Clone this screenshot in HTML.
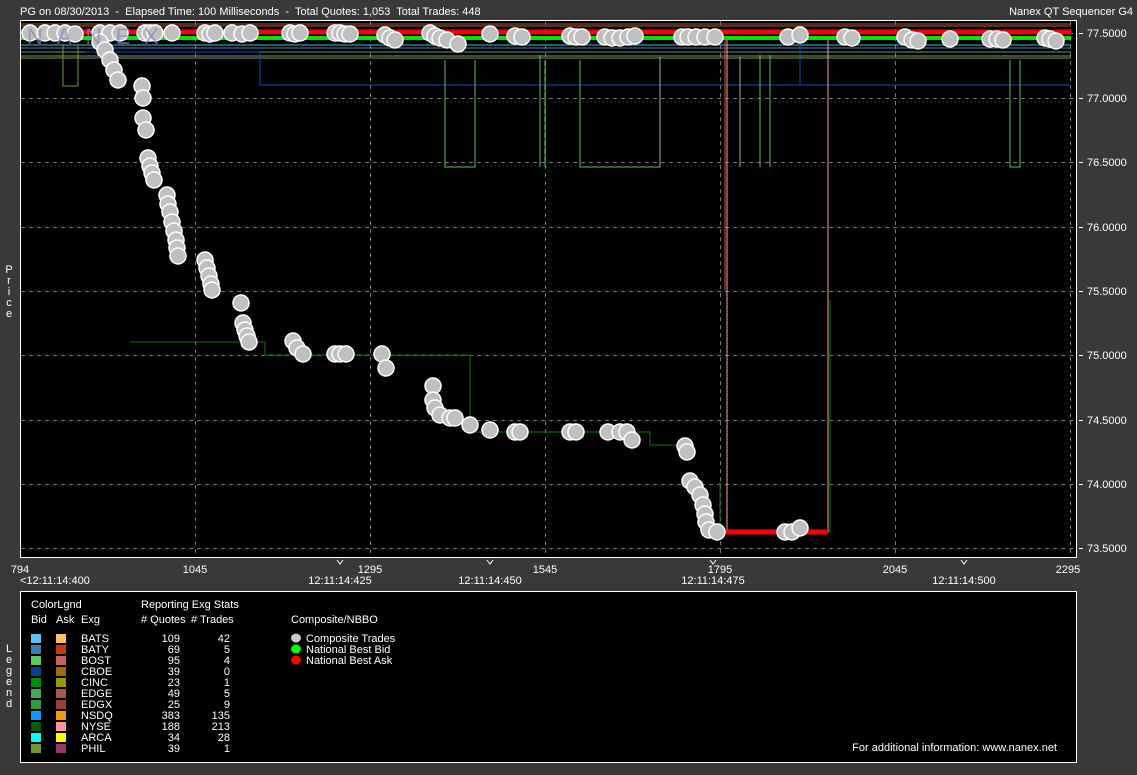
<!DOCTYPE html>
<html><head><meta charset="utf-8"><style>
html,body{margin:0;padding:0;background:#393939;}
svg{display:block;font-family:"Liberation Sans",sans-serif;}
text{white-space:pre;}
</style></head><body>
<svg width="1137" height="775" xmlns="http://www.w3.org/2000/svg">
<rect width="1137" height="775" fill="#393939"/>
<g font-size="11" fill="#fff">
<text x="20" y="15" xml:space="preserve">PG on 08/30/2013  -  Elapsed Time: 100 Milliseconds  -  Total Quotes: 1,053  Total Trades: 448</text>
<text x="1133" y="15" text-anchor="end">Nanex QT Sequencer G4</text>
</g>
<rect x="20.5" y="20.5" width="1056" height="537" fill="#000" stroke="#fff"/>
<g stroke="#777" stroke-dasharray="4,4" stroke-width="1">
<line x1="21" x2="1076" y1="33.5" y2="33.5"/><line x1="21" x2="1076" y1="98.5" y2="98.5"/><line x1="21" x2="1076" y1="162.5" y2="162.5"/><line x1="21" x2="1076" y1="227.5" y2="227.5"/><line x1="21" x2="1076" y1="291.5" y2="291.5"/><line x1="21" x2="1076" y1="355.5" y2="355.5"/><line x1="21" x2="1076" y1="420.5" y2="420.5"/><line x1="21" x2="1076" y1="484.5" y2="484.5"/><line x1="21" x2="1076" y1="548.5" y2="548.5"/>
<line y1="21" y2="557" x1="195.5" x2="195.5"/><line y1="21" y2="557" x1="370.5" x2="370.5"/><line y1="21" y2="557" x1="545.5" x2="545.5"/><line y1="21" y2="557" x1="720.5" x2="720.5"/><line y1="21" y2="557" x1="895.5" x2="895.5"/><line y1="21" y2="557" x1="1070.5" x2="1070.5"/>
</g>
<g fill="none" stroke-width="1" shape-rendering="crispEdges">
<path d="M21 26H1071" stroke="#a07010"/>
<path d="M21 24H1071" stroke="#b05040"/>
<path d="M21 45H1071" stroke="#30c0f0"/>
<path d="M21 48H1071" stroke="#4080c0"/>
<path d="M21 52H1071" stroke="#60a040"/>
<path d="M21 56H1071" stroke="#888"/>
<path d="M21 58H1071" stroke="#6a9a40"/>
<path d="M63 45V86H78V45" stroke="#6a9a40"/>
<path d="M85 52H260V85H800V45" stroke="#1050b0"/>
<path d="M800 85H1071" stroke="#1050b0"/>
<path d="M445 60V167H475V60" stroke="#60c060"/>
<path d="M580 60V167H660V60" stroke="#60c060"/>
<path d="M1010 60V167H1020V60" stroke="#60c060"/>
<path d="M540 55V167" stroke="#60c060"/>
<path d="M545 60V167" stroke="#60c060"/>
<path d="M760 55V167" stroke="#60c060"/>
<path d="M770 55V167" stroke="#60c060"/>
<path d="M740 57V167" stroke="#aaa"/>
<path d="M660 57V167" stroke="#aaa"/>
<path d="M130 342H265V355H470V432H650V445H685" stroke="#0a7a0a"/>
<path d="M720 482V532H830V300" stroke="#0a7a0a"/>
<path d="M727 40V532" stroke="#f0a0a0"/>
<path d="M828 40V532" stroke="#f0a0a0"/>
<path d="M725 40V290" stroke="#f04040"/>
</g>
<path d="M21 32H1071" stroke="#f00" stroke-width="5"/>
<path d="M21 38H1071" stroke="#0f0" stroke-width="4" opacity="0.9"/>
<path d="M725 532H828" stroke="#f00" stroke-width="5"/>
<g fill="#c0c0c0" stroke="#fff" stroke-width="1.5">
<circle cx="30" cy="33" r="8"/><circle cx="45" cy="33" r="8"/><circle cx="55" cy="33" r="8"/><circle cx="65" cy="33" r="8"/><circle cx="75" cy="34" r="8"/><circle cx="100" cy="33" r="8"/><circle cx="110" cy="33" r="8"/><circle cx="120" cy="33" r="8"/><circle cx="145" cy="33" r="8"/><circle cx="150" cy="33" r="8"/><circle cx="155" cy="33" r="8"/><circle cx="172" cy="33" r="8"/><circle cx="205" cy="33" r="8"/><circle cx="210" cy="34" r="8"/><circle cx="215" cy="33" r="8"/><circle cx="232" cy="33" r="8"/><circle cx="242" cy="34" r="8"/><circle cx="250" cy="33" r="8"/><circle cx="290" cy="33" r="8"/><circle cx="295" cy="34" r="8"/><circle cx="300" cy="33" r="8"/><circle cx="335" cy="33" r="8"/><circle cx="340" cy="33" r="8"/><circle cx="345" cy="34" r="8"/><circle cx="350" cy="34" r="8"/><circle cx="385" cy="35" r="8"/><circle cx="390" cy="38" r="8"/><circle cx="395" cy="40" r="8"/><circle cx="430" cy="33" r="8"/><circle cx="435" cy="36" r="8"/><circle cx="440" cy="38" r="8"/><circle cx="447" cy="40" r="8"/><circle cx="458" cy="44" r="8"/><circle cx="490" cy="34" r="8"/><circle cx="515" cy="36" r="8"/><circle cx="522" cy="37" r="8"/><circle cx="570" cy="36" r="8"/><circle cx="576" cy="37" r="8"/><circle cx="582" cy="37" r="8"/><circle cx="605" cy="37" r="8"/><circle cx="612" cy="38" r="8"/><circle cx="620" cy="38" r="8"/><circle cx="628" cy="37" r="8"/><circle cx="635" cy="36" r="8"/><circle cx="682" cy="37" r="8"/><circle cx="688" cy="37" r="8"/><circle cx="696" cy="37" r="8"/><circle cx="705" cy="37" r="8"/><circle cx="715" cy="37" r="8"/><circle cx="788" cy="37" r="8"/><circle cx="800" cy="35" r="8"/><circle cx="845" cy="37" r="8"/><circle cx="852" cy="38" r="8"/><circle cx="905" cy="37" r="8"/><circle cx="912" cy="40" r="8"/><circle cx="918" cy="41" r="8"/><circle cx="950" cy="39" r="8"/><circle cx="990" cy="39" r="8"/><circle cx="997" cy="39" r="8"/><circle cx="1003" cy="40" r="8"/><circle cx="1045" cy="38" r="8"/><circle cx="1050" cy="39" r="8"/><circle cx="1056" cy="41" r="8"/>
<circle cx="100" cy="42" r="8"/><circle cx="105" cy="50" r="8"/><circle cx="110" cy="60" r="8"/><circle cx="114" cy="70" r="8"/><circle cx="118" cy="80" r="8"/><circle cx="142" cy="86" r="8"/><circle cx="143" cy="98" r="8"/><circle cx="143" cy="118" r="8"/><circle cx="146" cy="130" r="8"/><circle cx="148" cy="158" r="8"/><circle cx="150" cy="166" r="8"/><circle cx="152" cy="173" r="8"/><circle cx="154" cy="180" r="8"/><circle cx="167" cy="195" r="8"/><circle cx="168" cy="204" r="8"/><circle cx="170" cy="212" r="8"/><circle cx="172" cy="222" r="8"/><circle cx="174" cy="231" r="8"/><circle cx="176" cy="240" r="8"/><circle cx="177" cy="248" r="8"/><circle cx="178" cy="256" r="8"/><circle cx="205" cy="260" r="8"/><circle cx="207" cy="268" r="8"/><circle cx="209" cy="276" r="8"/><circle cx="211" cy="284" r="8"/><circle cx="212" cy="290" r="8"/><circle cx="241" cy="303" r="8"/><circle cx="243" cy="323" r="8"/><circle cx="245" cy="330" r="8"/><circle cx="247" cy="336" r="8"/><circle cx="249" cy="342" r="8"/><circle cx="293" cy="341" r="8"/><circle cx="297" cy="348" r="8"/><circle cx="303" cy="354" r="8"/><circle cx="335" cy="354" r="8"/><circle cx="340" cy="354" r="8"/><circle cx="346" cy="354" r="8"/><circle cx="382" cy="354" r="8"/><circle cx="386" cy="368" r="8"/><circle cx="433" cy="386" r="8"/><circle cx="433" cy="400" r="8"/><circle cx="435" cy="408" r="8"/><circle cx="440" cy="415" r="8"/><circle cx="450" cy="418" r="8"/><circle cx="455" cy="418" r="8"/><circle cx="470" cy="425" r="8"/><circle cx="490" cy="430" r="8"/><circle cx="515" cy="432" r="8"/><circle cx="520" cy="432" r="8"/><circle cx="570" cy="432" r="8"/><circle cx="576" cy="432" r="8"/><circle cx="608" cy="432" r="8"/><circle cx="620" cy="432" r="8"/><circle cx="627" cy="432" r="8"/><circle cx="632" cy="440" r="8"/><circle cx="685" cy="446" r="8"/><circle cx="687" cy="452" r="8"/><circle cx="690" cy="481" r="8"/><circle cx="695" cy="487" r="8"/><circle cx="700" cy="495" r="8"/><circle cx="703" cy="505" r="8"/><circle cx="705" cy="514" r="8"/><circle cx="706" cy="522" r="8"/><circle cx="709" cy="530" r="8"/><circle cx="717" cy="532" r="8"/><circle cx="785" cy="532" r="8"/><circle cx="792" cy="532" r="8"/><circle cx="800" cy="528" r="8"/>
</g>
<text x="27" y="44" font-size="22" fill="#8888bb" letter-spacing="14" opacity="0.7">NANEX</text>
<g font-size="11" fill="#fff">
<g text-anchor="start"><text x="1087" y="37">77.5000</text><text x="1087" y="102">77.0000</text><text x="1087" y="166">76.5000</text><text x="1087" y="231">76.0000</text><text x="1087" y="295">75.5000</text><text x="1087" y="359">75.0000</text><text x="1087" y="424">74.5000</text><text x="1087" y="488">74.0000</text><text x="1087" y="552">73.5000</text></g>
<g stroke="#fff"><line x1="1079" x2="1083" y1="33.5" y2="33.5"/><line x1="1079" x2="1083" y1="98.5" y2="98.5"/><line x1="1079" x2="1083" y1="162.5" y2="162.5"/><line x1="1079" x2="1083" y1="227.5" y2="227.5"/><line x1="1079" x2="1083" y1="291.5" y2="291.5"/><line x1="1079" x2="1083" y1="355.5" y2="355.5"/><line x1="1079" x2="1083" y1="420.5" y2="420.5"/><line x1="1079" x2="1083" y1="484.5" y2="484.5"/><line x1="1079" x2="1083" y1="548.5" y2="548.5"/></g>
<g text-anchor="middle"><text x="20" y="573">794</text><text x="195" y="573">1045</text><text x="370" y="573">1295</text><text x="545" y="573">1545</text><text x="720" y="573">1795</text><text x="895" y="573">2045</text><text x="1068" y="573">2295</text>
<text x="340" y="584">12:11:14:425</text><text x="490" y="584">12:11:14:450</text><text x="713" y="584">12:11:14:475</text><text x="964" y="584">12:11:14:500</text>
<text x="9" y="273">P</text><text x="9" y="284">r</text><text x="9" y="295">i</text><text x="9" y="306">c</text><text x="9" y="317">e</text>
<text x="9" y="652">L</text><text x="9" y="663">e</text><text x="9" y="674">g</text><text x="9" y="685">e</text><text x="9" y="696">n</text><text x="9" y="707">d</text></g>
<text x="20" y="584">&lt;12:11:14:400</text>
<g fill="none" stroke="#fff"><path d="M337 560l3 4 3-4"/><path d="M487 560l3 4 3-4"/><path d="M710 560l3 4 3-4"/><path d="M961 560l3 4 3-4"/></g>
</g>
<rect x="20.5" y="591.5" width="1056" height="171" fill="#000" stroke="#fff"/>
<g font-size="11" fill="#fff">
<text x="31" y="608">ColorLgnd</text><text x="141" y="608">Reporting Exg Stats</text>
<text x="31" y="623">Bid</text><text x="56" y="623">Ask</text><text x="81" y="623">Exg</text><text x="141" y="623"># Quotes</text><text x="191" y="623"># Trades</text><text x="291" y="623">Composite/NBBO</text>
<g>
<rect x="31" y="634" width="10" height="9" fill="#60c0f8"/><rect x="56" y="634" width="10" height="9" fill="#f8c060"/><text x="81" y="642">BATS</text><text x="180" y="642" text-anchor="end">109</text><text x="230" y="642" text-anchor="end">42</text>
<rect x="31" y="645" width="10" height="9" fill="#4078b0"/><rect x="56" y="645" width="10" height="9" fill="#c83810"/><text x="81" y="653">BATY</text><text x="180" y="653" text-anchor="end">69</text><text x="230" y="653" text-anchor="end">5</text>
<rect x="31" y="656" width="10" height="9" fill="#60c860"/><rect x="56" y="656" width="10" height="9" fill="#c86060"/><text x="81" y="664">BOST</text><text x="180" y="664" text-anchor="end">95</text><text x="230" y="664" text-anchor="end">4</text>
<rect x="31" y="667" width="10" height="9" fill="#084090"/><rect x="56" y="667" width="10" height="9" fill="#a06808"/><text x="81" y="675">CBOE</text><text x="180" y="675" text-anchor="end">39</text><text x="230" y="675" text-anchor="end">0</text>
<rect x="31" y="678" width="10" height="9" fill="#088808"/><rect x="56" y="678" width="10" height="9" fill="#989808"/><text x="81" y="686">CINC</text><text x="180" y="686" text-anchor="end">23</text><text x="230" y="686" text-anchor="end">1</text>
<rect x="31" y="689" width="10" height="9" fill="#48a858"/><rect x="56" y="689" width="10" height="9" fill="#a85848"/><text x="81" y="697">EDGE</text><text x="180" y="697" text-anchor="end">49</text><text x="230" y="697" text-anchor="end">5</text>
<rect x="31" y="700" width="10" height="9" fill="#389848"/><rect x="56" y="700" width="10" height="9" fill="#984038"/><text x="81" y="708">EDGX</text><text x="180" y="708" text-anchor="end">25</text><text x="230" y="708" text-anchor="end">9</text>
<rect x="31" y="711" width="10" height="9" fill="#1098f8"/><rect x="56" y="711" width="10" height="9" fill="#f89808"/><text x="81" y="719">NSDQ</text><text x="180" y="719" text-anchor="end">383</text><text x="230" y="719" text-anchor="end">135</text>
<rect x="31" y="722" width="10" height="9" fill="#085808"/><rect x="56" y="722" width="10" height="9" fill="#f89898"/><text x="81" y="730">NYSE</text><text x="180" y="730" text-anchor="end">188</text><text x="230" y="730" text-anchor="end">213</text>
<rect x="31" y="733" width="10" height="9" fill="#08f8f8"/><rect x="56" y="733" width="10" height="9" fill="#f8f808"/><text x="81" y="741">ARCA</text><text x="180" y="741" text-anchor="end">34</text><text x="230" y="741" text-anchor="end">28</text>
<rect x="31" y="744" width="10" height="9" fill="#689838"/><rect x="56" y="744" width="10" height="9" fill="#983868"/><text x="81" y="752">PHIL</text><text x="180" y="752" text-anchor="end">39</text><text x="230" y="752" text-anchor="end">1</text>
</g>
<ellipse cx="296" cy="638" rx="5" ry="4.5" fill="#c8c8c8"/><text x="306" y="642">Composite Trades</text>
<ellipse cx="296" cy="649" rx="5" ry="4.5" fill="#0f0"/><text x="306" y="653">National Best Bid</text>
<ellipse cx="296" cy="660" rx="5" ry="4.5" fill="#f00"/><text x="306" y="664">National Best Ask</text>
<text x="1057" y="751" text-anchor="end">For additional information: www.nanex.net</text>
</g>
</svg>
</body></html>
